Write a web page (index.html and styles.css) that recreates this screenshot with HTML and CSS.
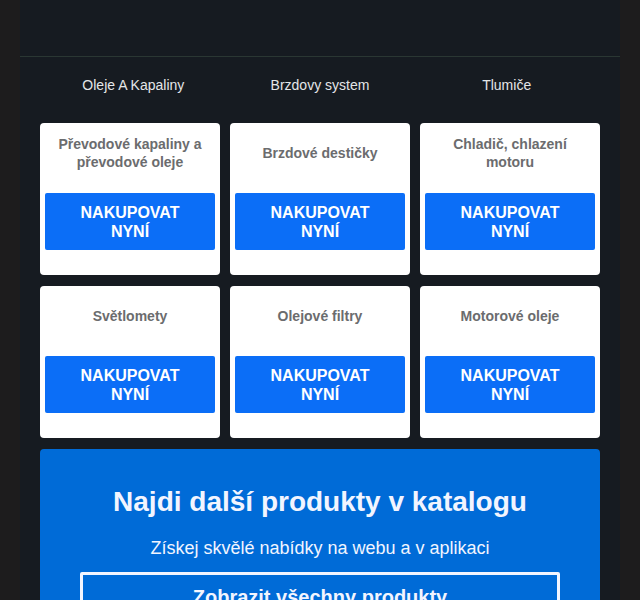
FILE: index.html
```html
<!DOCTYPE html>
<html lang="cs">
<head>
<meta charset="utf-8">
<title>Katalog</title>
<link rel="stylesheet" href="styles.css">
</head>
<body>
<div class="page">
  <div class="header"></div>
  <div class="content">
    <div class="cats">
      <div class="cat">Oleje A Kapaliny</div>
      <div class="cat">Brzdovy system</div>
      <div class="cat">Tlumiče</div>
    </div>
    <div class="cards">
      <div class="card"><div class="card-title">Převodové kapaliny a převodové oleje</div><a class="buy">NAKUPOVAT NYNÍ</a></div>
      <div class="card"><div class="card-title">Brzdové destičky</div><a class="buy">NAKUPOVAT NYNÍ</a></div>
      <div class="card"><div class="card-title">Chladič, chlazení motoru</div><a class="buy">NAKUPOVAT NYNÍ</a></div>
      <div class="card"><div class="card-title">Světlomety</div><a class="buy">NAKUPOVAT NYNÍ</a></div>
      <div class="card"><div class="card-title">Olejové filtry</div><a class="buy">NAKUPOVAT NYNÍ</a></div>
      <div class="card"><div class="card-title">Motorové oleje</div><a class="buy">NAKUPOVAT NYNÍ</a></div>
    </div>
    <div class="banner">
      <h2 class="banner-title">Najdi další produkty v katalogu</h2>
      <p class="banner-sub">Získej skvělé nabídky na webu a v aplikaci</p>
      <a class="banner-btn">Zobrazit všechny produkty</a>
    </div>
  </div>
</div>
</body>
</html>
```
FILE: styles.css
```css
html, body {
  margin: 0;
  padding: 0;
  background: #1d1c1d;
  font-family: "Liberation Sans", Arial, sans-serif;
}
.page {
  width: 600px;
  margin: 0 auto;
  background: #161b21;
  min-height: 600px;
}
.header {
  height: 56px;
  border-bottom: 1px solid #2a3733;
}
.content {
  padding: 0 20px;
}
.cats {
  display: grid;
  grid-template-columns: repeat(3, 1fr);
  padding: 18px 0 28px;
}
.cat {
  text-align: center;
  color: #e4e6e8;
  font-size: 14px;
  line-height: 20px;
}
.cards {
  display: grid;
  grid-template-columns: repeat(3, 1fr);
  gap: 11px 10px;
}
.card {
  background: #ffffff;
  border-radius: 4px;
  padding: 5px 5px 25px;
  display: flex;
  flex-direction: column;
}
.card-title {
  height: 48px;
  display: flex;
  align-items: center;
  justify-content: center;
  text-align: center;
  color: #6b6c6e;
  font-weight: bold;
  font-size: 14px;
  line-height: 18px;
  padding: 1px 8px 0;
  margin-bottom: 16px;
}
.buy {
  display: block;
  background: #0b6ef7;
  color: #ffffff;
  text-align: center;
  font-weight: bold;
  font-size: 16px;
  line-height: 19px;
  padding: 9.5px 20px;
  border-radius: 2px;
}
.banner {
  margin-top: 11px;
  background: #006bd7;
  border-radius: 4px;
  padding: 37px 40px 20px;
  text-align: center;
  color: #f2f5ff;
}
.banner-title {
  margin: 0;
  font-size: 28px;
  line-height: 32px;
  font-weight: bold;
}
.banner-sub {
  margin: 19px 0 13px;
  font-size: 18px;
  line-height: 22px;
}
.banner-btn {
  display: block;
  border: 3px solid #f2f5ff;
  border-radius: 2px;
  padding: 10px 20px;
  font-size: 20px;
  line-height: 24px;
  font-weight: bold;
}
```
